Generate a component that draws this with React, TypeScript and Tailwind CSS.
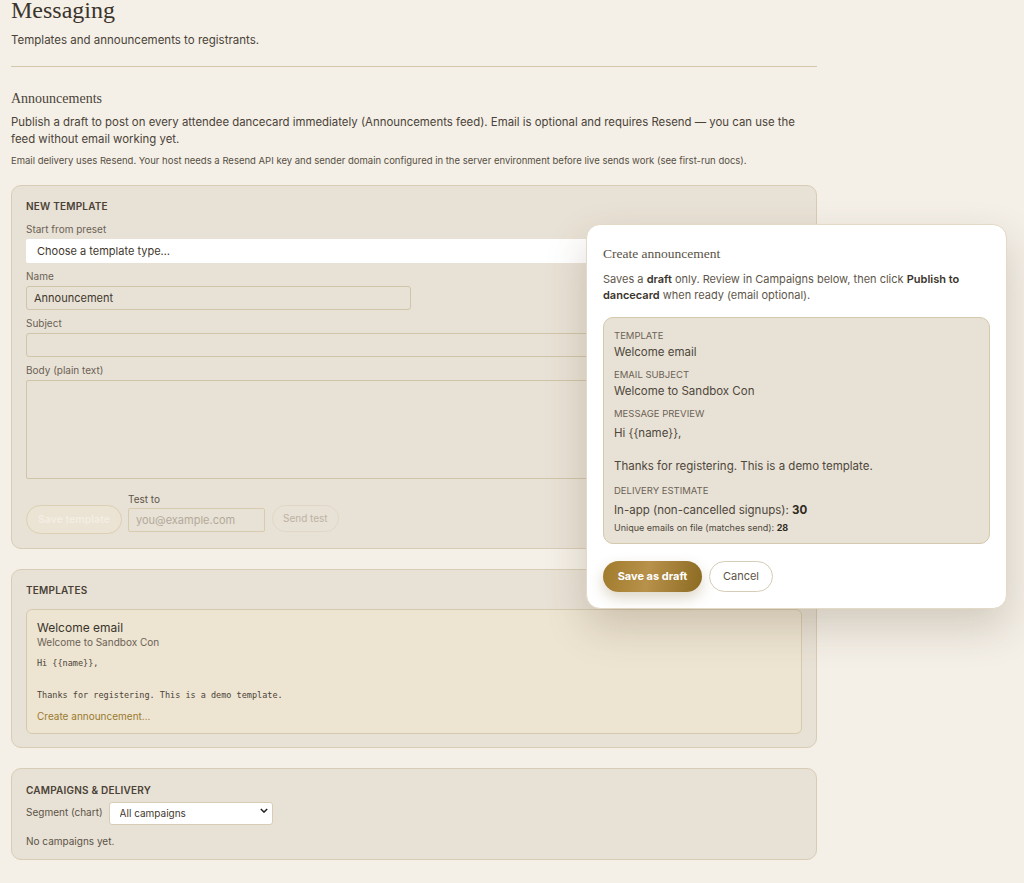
import { useState } from "react";

type Preview = {
  template: string;
  subject: string;
  body: string;
  inApp: number;
  emails: number;
};

const SANS = "font-['Inter','Noto_Sans',sans-serif]";
const SERIF = "font-['Liberation_Serif','DejaVu_Serif',serif]";
const MONO = "font-['DejaVu_Sans_Mono','Liberation_Mono',monospace]";

const preview: Preview = {
  template: "Welcome email",
  subject: "Welcome to Sandbox Con",
  body: "Hi {{name}},\n\nThanks for registering. This is a demo template.",
  inApp: 30,
  emails: 28,
};

function SectionTitle({ children }: { children: React.ReactNode }) {
  return (
    <div className="text-[10px] font-semibold uppercase tracking-[0.02em] text-[#4a4236]">
      {children}
    </div>
  );
}

function Field({ label, children }: { label: string; children: React.ReactNode }) {
  return (
    <div className="flex flex-col">
      <label className="mb-[3px] text-[10px] leading-[14px] text-[#6b6255]">{label}</label>
      {children}
    </div>
  );
}

function Caption({ children, className = "" }: { children: React.ReactNode; className?: string }) {
  return <div className={`text-[9.5px] uppercase leading-[14px] text-[#6b6255] ${className}`}>{children}</div>;
}

function AnnouncementDialog({ data, onClose }: { data: Preview; onClose: () => void }) {
  const lines = data.body.split("\n");
  return (
    <div className="absolute left-[586px] top-[224px] w-[421px] rounded-[14px] border border-[#e2d9c6] bg-white px-[16px] pb-[16px] pt-[20px] shadow-[0_18px_40px_rgba(90,75,45,0.22)]">
      <h3 className={`${SERIF} text-[13.5px] leading-[18px] text-[#5a5246]`}>Create announcement</h3>
      <p className="mt-[8px] text-[11px] leading-[16px] text-[#5e564a]">
        Saves a <span className="font-semibold text-[#3a342b]">draft</span> only. Review in Campaigns below,
        then click <span className="font-semibold text-[#3a342b]">Publish to dancecard</span> when ready
        (email optional).
      </p>

      <div className="mt-[14px] rounded-[10px] border border-[#d4c8ad] bg-[#e8e1d5] px-[10px] pb-[8px] pt-[11px] text-[#4e473c]">
        <Caption>Template</Caption>
        <div className="mt-[1px] text-[11.5px] leading-[17px]">{data.template}</div>

        <Caption className="mt-[7px]">Email subject</Caption>
        <div className="mt-[1px] text-[11.5px] leading-[17px]">{data.subject}</div>

        <Caption className="mt-[7px]">Message preview</Caption>
        <div className="mt-[4px] text-[11.5px] leading-[16.5px]">
          {lines.map((line, i) => (
            <div key={i} className="min-h-[16.5px]">{line}</div>
          ))}
        </div>

        <Caption className="mt-[9px]">Delivery estimate</Caption>
        <div className="mt-[3px] text-[11.5px] leading-[18px]">
          In-app (non-cancelled signups): <span className="font-bold text-[#2f2a22]">{data.inApp}</span>
        </div>
        <div className="mt-[2px] text-[9px] leading-[14px]">
          Unique emails on file (matches send): <span className="font-bold text-[#2f2a22]">{data.emails}</span>
        </div>
      </div>

      <div className="mt-[17px] flex items-center gap-[7px]">
        <button className="h-[31px] w-[99px] rounded-full bg-[linear-gradient(100deg,#a07b2c_0%,#b8914a_45%,#8b6a22_100%)] text-[11px] font-bold text-white shadow-[0_6px_14px_rgba(120,90,30,0.25)]">
          Save as draft
        </button>
        <button
          onClick={onClose}
          className="h-[31px] w-[64px] rounded-full border border-[#d6ccb7] bg-white text-[11px] text-[#5c5448]"
        >
          Cancel
        </button>
      </div>
    </div>
  );
}

export default function App() {
  const [open, setOpen] = useState(true);
  const [segment, setSegment] = useState("all");

  return (
    <div className={`${SANS} relative min-h-screen overflow-hidden bg-[#f4efe7] text-[#3f382e]`}>
      <div className="w-[828px] px-[11px] pb-[20px]">
        <h1 className={`${SERIF} -mt-[2px] text-[24px] leading-none text-[#3a342b]`}>Messaging</h1>
        <p className="mt-[11px] text-[11.5px] leading-[15px] text-[#4a4337]">Templates and announcements to registrants.</p>
        <hr className="mt-[18px] border-0 border-t border-[#d3c7aa]" />

        <h2 className={`${SERIF} mt-[23px] text-[14px] leading-[18px] text-[#4a4337]`}>Announcements</h2>
        <p className="mt-[6px] max-w-[790px] text-[11.4px] leading-[17px] text-[#4a4337]">
          Publish a draft to post on every attendee dancecard immediately (Announcements feed). Email is optional
          and requires Resend — you can use the feed without email working yet.
        </p>
        <p className="mt-[6px] text-[9.5px] leading-[14px] text-[#564f44]">
          Email delivery uses Resend. Your host needs a Resend API key and sender domain configured in the server
          environment before live sends work (see first-run docs).
        </p>

        {/* new template form */}
        <section className="mt-[17px] rounded-[10px] border border-[#d8ccb4] bg-[#e8e1d5] px-[14px] pb-[14px] pt-[13px]">
          <SectionTitle>New template</SectionTitle>
          <div className="mt-[8px] flex flex-col gap-[6px]">
            <Field label="Start from preset">
              <div className="flex h-[24px] items-center rounded-[2px] bg-white px-[11px] text-[11px] text-[#3f382e]">
                Choose a template type…
              </div>
            </Field>
            <Field label="Name">
              <input
                defaultValue="Announcement"
                className="h-[24px] w-[385px] rounded-[3px] border border-[#d0c4a9] bg-transparent px-[7px] text-[11px] text-[#3f382e] outline-none"
              />
            </Field>
            <Field label="Subject">
              <input className="h-[24px] rounded-[3px] border border-[#d0c4a9] bg-transparent px-[7px] text-[11px] outline-none" />
            </Field>
            <Field label="Body (plain text)">
              <textarea className="h-[99px] resize-none rounded-[2px] border border-[#d0c4a9] bg-transparent px-[7px] text-[11px] outline-none" />
            </Field>
          </div>

          <div className="mt-[13px] flex items-end gap-[6px]">
            <button
              disabled
              className="h-[29px] w-[96px] rounded-full border border-[#dccfb3] bg-[#ebe3d3] text-[10.5px] font-semibold text-[#f3eee4]"
            >
              Save template
            </button>
            <div className="flex flex-col">
              <label className="mb-[2px] text-[10px] leading-[14px] text-[#5c5448]">Test to</label>
              <input
                placeholder="you@example.com"
                className="mb-[2px] h-[24px] w-[137px] rounded-[2px] border border-[#d8cbb0] bg-transparent px-[7px] text-[11px] outline-none placeholder:text-[#b3aa9b]"
              />
            </div>
            <button
              disabled
              className="mb-[2px] ml-[1px] h-[27px] rounded-full border border-[#e0d7c6] px-[10px] text-[10px] text-[#bcb3a4]"
            >
              Send test
            </button>
          </div>
        </section>

        {/* saved templates */}
        <section className="mt-[20px] rounded-[10px] border border-[#d8ccb4] bg-[#e8e1d5] px-[14px] pb-[13px] pt-[13px]">
          <SectionTitle>Templates</SectionTitle>
          <div className="mt-[11px] rounded-[6px] border border-[#d6caae] bg-[#ede4d2] px-[10px] pb-[10px] pt-[10px]">
            <div className="text-[12px] leading-[16px] text-[#3a342b]">Welcome email</div>
            <div className="text-[10px] leading-[13px] text-[#6b6255]">Welcome to Sandbox Con</div>
            <pre className={`${MONO} mt-[6px] text-[8.5px] leading-[16px] text-[#4a4337]`}>
              {"Hi {{name}},\n\nThanks for registering. This is a demo template."}
            </pre>
            <button
              onClick={() => setOpen(true)}
              className="mt-[7px] block text-[10px] leading-[13px] text-[#9a7a2e]"
            >
              Create announcement…
            </button>
          </div>
        </section>

        {/* campaigns */}
        <section className="mt-[20px] rounded-[10px] border border-[#d8ccb4] bg-[#e8e1d5] px-[14px] pb-[10px] pt-[14px]">
          <SectionTitle>Campaigns &amp; delivery</SectionTitle>
          <div className="mt-[1px] flex items-center gap-[6px]">
            <span className="text-[10px] text-[#5c5448]">Segment (chart)</span>
            <div className="relative">
              <select
                value={segment}
                onChange={e => setSegment(e.target.value)}
                className="h-[23px] w-[164px] appearance-none rounded-[3px] border border-[#d8ccb4] bg-white pl-[10px] text-[10px] text-[#3f382e] outline-none"
              >
                <option value="all">All campaigns</option>
              </select>
              <svg
                viewBox="0 0 10 6"
                className="pointer-events-none absolute right-[5px] top-[9px] h-[5px] w-[8px]"
              >
                <path d="M1 1l4 4 4-4" fill="none" stroke="#222" strokeWidth="1.8" />
              </svg>
            </div>
          </div>
          <p className="mt-[9px] text-[10px] text-[#5c5448]">No campaigns yet.</p>
        </section>
      </div>

      {open && <AnnouncementDialog data={preview} onClose={() => setOpen(false)} />}
    </div>
  );
}
